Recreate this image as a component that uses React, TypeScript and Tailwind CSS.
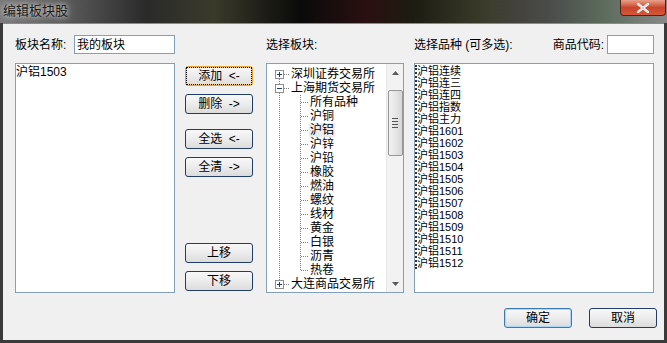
import React from 'react';

const FONT = "font-['Liberation_Sans','Noto_Sans_CJK_SC',sans-serif]";

type Node = { label: string; level: 0 | 1; kind?: 'plus' | 'minus'; first?: boolean; last?: boolean; hover?: boolean };

const tree: Node[] = [
  { label: '深圳证券交易所', level: 0, kind: 'plus', first: true },
  { label: '上海期货交易所', level: 0, kind: 'minus' },
  { label: '所有品种', level: 1 },
  { label: '沪铜', level: 1 },
  { label: '沪铝', level: 1, hover: true },
  { label: '沪锌', level: 1 },
  { label: '沪铅', level: 1 },
  { label: '橡胶', level: 1 },
  { label: '燃油', level: 1 },
  { label: '螺纹', level: 1 },
  { label: '线材', level: 1 },
  { label: '黄金', level: 1 },
  { label: '白银', level: 1 },
  { label: '沥青', level: 1 },
  { label: '热卷', level: 1, last: true },
  { label: '大连商品交易所', level: 0, kind: 'plus', last: true },
];

const varieties = [
  '沪铝连续', '沪铝连三', '沪铝连四', '沪铝指数', '沪铝主力',
  '沪铝1601', '沪铝1602', '沪铝1503', '沪铝1504', '沪铝1505', '沪铝1506',
  '沪铝1507', '沪铝1508', '沪铝1509', '沪铝1510', '沪铝1511', '沪铝1512',
];

// 树的连接线，每行一个小 svg
function TreeGutter({ node }: { node: Node }) {
  const dots = { stroke: '#808080', strokeWidth: 1, strokeDasharray: '1 1', shapeRendering: 'crispEdges' as const };
  if (node.level === 0) {
    return (
      <svg width="23" height="14" className="shrink-0">
        {!node.first && <line x1="12.5" y1="0" x2="12.5" y2="3" {...dots} />}
        {!node.last && <line x1="12.5" y1="12" x2="12.5" y2="14" {...dots} />}
        <line x1="17" y1="7.5" x2="22" y2="7.5" {...dots} />
        <rect x="8.5" y="3.5" width="8" height="8" fill="#fff" stroke="#8e8f8f" shapeRendering="crispEdges" />
        <line x1="10" y1="7.5" x2="15" y2="7.5" stroke="#1b3a8c" shapeRendering="crispEdges" />
        {node.kind === 'plus' && <line x1="12.5" y1="5" x2="12.5" y2="10" stroke="#1b3a8c" shapeRendering="crispEdges" />}
      </svg>
    );
  }
  return (
    <svg width="42" height="14" className="shrink-0">
      <line x1="12.5" y1="0" x2="12.5" y2="14" {...dots} />
      <line x1="33.5" y1="0" x2="33.5" y2={node.last ? 8 : 14} {...dots} />
      <line x1="34" y1="7.5" x2="41" y2="7.5" {...dots} />
    </svg>
  );
}

function Btn({ children, variant }: { children: React.ReactNode; variant?: 'focus' | 'default' }) {
  const border =
    variant === 'focus'
      ? 'border-[#e8a12c] shadow-[inset_0_0_0_1px_#ffd58a]'
      : variant === 'default'
      ? 'border-[#3d7bad] shadow-[inset_0_0_0_1px_#a9d6f5]'
      : 'border-[#203d63]';
  return (
    <div
      className={`h-[20px] w-[68px] rounded-[3px] border ${border} bg-gradient-to-b from-[#f8f8f8] via-[#ececec] to-[#dcdcdc] flex items-center justify-center text-[12px] text-black`}
    >
      <div className={`px-[2px] leading-[14px] ${variant === 'focus' ? 'outline outline-1 outline-dotted outline-black outline-offset-[1px] w-[62px] text-center' : ''}`}>
        {children}
      </div>
    </div>
  );
}

export default function App() {
  return (
    <div className={`w-[667px] h-[343px] bg-[#3a3a3a] flex flex-col ${FONT} overflow-hidden`}>
      {/* 标题栏 */}
      <div className="h-[23px] flex items-start justify-between bg-[linear-gradient(90deg,#7a7a7a_0%,#5a5a5a_10%,#2a2a2a_22%,#3a3a2a_32%,#0a0a0a_45%,#2a1010_55%,#1c1c12_62%,#3a3a2a_72%,#4a4a4a_82%,#5a6a5a_90%,#888_100%)]">
        <div className="pl-[3px] pt-[3px] text-[13px] leading-[16px] text-[#1a1a1a] [text-shadow:0_0_4px_#d8d8d8,0_0_8px_#c8c8c8]">
          编辑板块股
        </div>
        <div className="mr-[1px] w-[46px] h-[16px] rounded-b-[4px] border border-t-0 border-[#5a1f14] bg-gradient-to-b from-[#e8a08a] via-[#c8452a] to-[#d4583a] flex items-center justify-center">
          <svg width="12" height="10" viewBox="0 0 12 10">
            <path d="M1 1 L11 9 M11 1 L1 9" stroke="#fff" strokeWidth="2.4" strokeLinecap="square" />
            <path d="M1 1 L11 9 M11 1 L1 9" stroke="#3a3a5a" strokeWidth="0.6" opacity="0.4" />
          </svg>
        </div>
      </div>

      {/* 客户区 */}
      <div className="mx-[3px] mb-[3px] flex-1 bg-[#f0f0f0] border-t border-[#8a8a8a] flex flex-col pl-[12px] pt-[11px]">
        <div className="flex">
          {/* 第一列 */}
          <div className="w-[160px] flex flex-col">
            <div className="h-[19px] flex items-center justify-between text-[12px]">
              <span>板块名称:</span>
              <div className="w-[101px] h-[19px] border border-[#82a0bc] bg-white px-[2px] flex items-center">我的板块</div>
            </div>
            <div className="mt-[9px] h-[230px] border border-[#82a0bc] bg-white text-[12px] leading-[14px] pt-[1px]">
              沪铝1503
            </div>
          </div>

          {/* 按钮列 */}
          <div className="ml-[10px] w-[68px] flex flex-col pt-[31px]">
            <Btn variant="focus">添加&nbsp; &lt;-</Btn>
            <div className="mt-[8px]"><Btn>删除&nbsp; -&gt;</Btn></div>
            <div className="mt-[15px]"><Btn>全选&nbsp; &lt;-</Btn></div>
            <div className="mt-[8px]"><Btn>全清&nbsp; -&gt;</Btn></div>
            <div className="mt-[66px]"><Btn>上移</Btn></div>
            <div className="mt-[8px]"><Btn>下移</Btn></div>
          </div>

          {/* 板块树 */}
          <div className="ml-[13px] w-[138px] flex flex-col">
            <div className="h-[19px] flex items-center text-[12px] pt-[1px]">选择板块:</div>
            <div className="mt-[9px] h-[230px] border border-[#82a0bc] bg-white flex">
              <div className="flex-1 pt-[3px] overflow-hidden">
                {tree.map((n) => (
                  <div key={n.label + n.level} className="h-[14px] flex items-center">
                    <TreeGutter node={n} />
                    <span className={`text-[12px] leading-[14px] whitespace-nowrap px-[1px] ${n.hover ? 'bg-[#ececec]' : ''}`}>
                      {n.label}
                    </span>
                  </div>
                ))}
              </div>
              {/* 滚动条 */}
              <div className="w-[17px] bg-[#f2f2f2] border-l border-[#e6e6e6] flex flex-col items-center">
                <div className="h-[17px] flex items-center justify-center">
                  <svg width="7" height="4"><path d="M0 4 L3.5 0 L7 4 Z" fill="#5a5a5a" /></svg>
                </div>
                <div className="mt-[9px] w-[15px] h-[66px] rounded-[2px] border border-[#979797] bg-gradient-to-r from-[#f2f2f2] via-[#e6e6e6] to-[#d6d6d6] flex flex-col items-center justify-center gap-[2px]">
                  <div className="w-[6px] h-[1px] bg-[#555]" />
                  <div className="w-[6px] h-[1px] bg-[#555]" />
                  <div className="w-[6px] h-[1px] bg-[#555]" />
                  <div className="w-[6px] h-[1px] bg-[#555]" />
                </div>
                <div className="flex-1" />
                <div className="h-[17px] flex items-center justify-center">
                  <svg width="7" height="4"><path d="M0 0 L3.5 4 L7 0 Z" fill="#5a5a5a" /></svg>
                </div>
              </div>
            </div>
          </div>

          {/* 品种列表 */}
          <div className="ml-[10px] w-[240px] flex flex-col">
            <div className="h-[19px] flex items-center justify-between text-[12px]">
              <span className="pt-[1px]">选择品种 (可多选):</span>
              <div className="flex items-center gap-[3px]">
                <span>商品代码:</span>
                <div className="w-[47px] h-[19px] border border-[#82a0bc] bg-white" />
              </div>
            </div>
            <div className="mt-[9px] h-[230px] border border-[#82a0bc] bg-white pt-[1px]">
              <div className="border-l-2 border-dotted border-[#333] w-fit">
                {varieties.map((v) => (
                  <div key={v} className="h-[12px] text-[11px] leading-[12px] whitespace-nowrap">
                    {v}
                  </div>
                ))}
              </div>
            </div>
          </div>
        </div>

        {/* 底部按钮 */}
        <div className="mt-[15px] flex justify-end gap-[17px] pr-[7px]">
          <Btn variant="default">确定</Btn>
          <Btn>取消</Btn>
        </div>
      </div>
    </div>
  );
}
